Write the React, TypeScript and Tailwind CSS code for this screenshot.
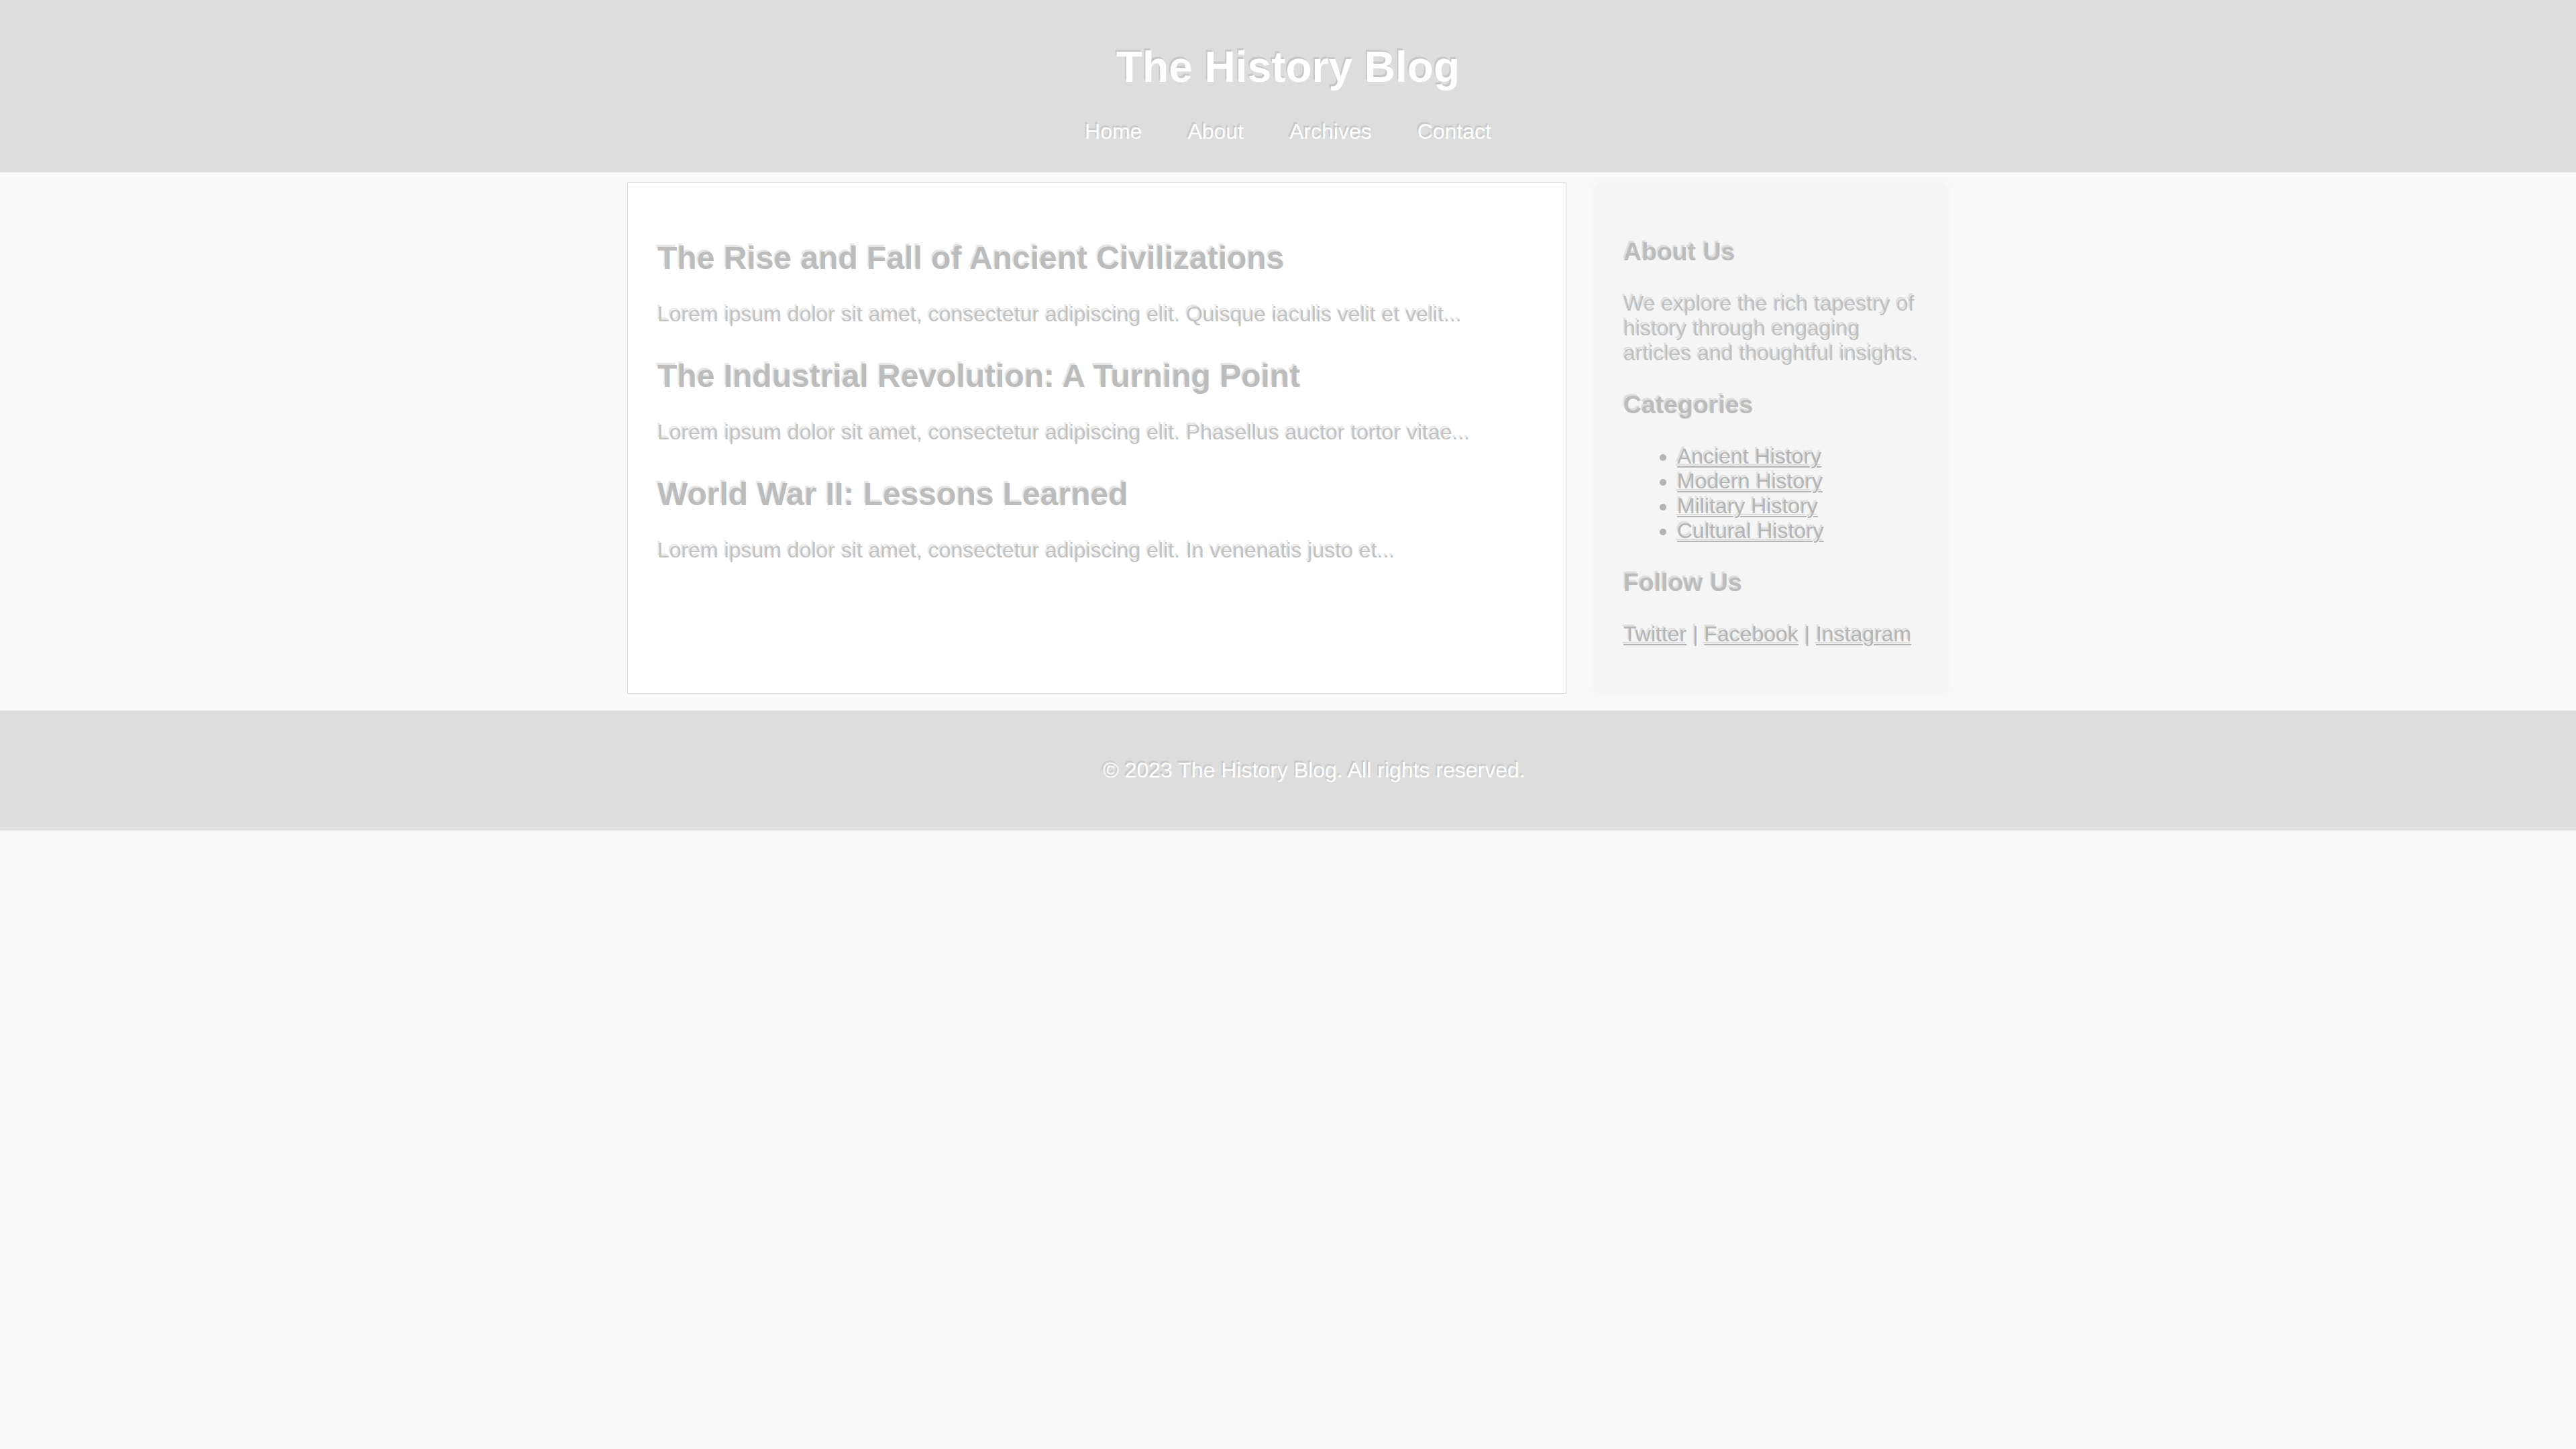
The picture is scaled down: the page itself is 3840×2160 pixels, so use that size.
import React from "react";

const shadow = "[text-shadow:-2px_-3px_1px_rgba(0,0,0,0.10)]";

const articles = [
  {
    title: "The Rise and Fall of Ancient Civilizations",
    text: "Lorem ipsum dolor sit amet, consectetur adipiscing elit. Quisque iaculis velit et velit...",
  },
  {
    title: "The Industrial Revolution: A Turning Point",
    text: "Lorem ipsum dolor sit amet, consectetur adipiscing elit. Phasellus auctor tortor vitae...",
  },
  {
    title: "World War II: Lessons Learned",
    text: "Lorem ipsum dolor sit amet, consectetur adipiscing elit. In venenatis justo et...",
  },
];

const categories = ["Ancient History", "Modern History", "Military History", "Cultural History"];

export default function App() {
  return (
    <div
      className="min-h-[2160px] w-full bg-[#fafafa] text-[32px] leading-[37px]"
      style={{ fontFamily: '"Liberation Sans", Arial, sans-serif' }}
    >
      <header className="flex flex-col items-center bg-[#dddddd] pt-[63px] pb-[42px] text-white">
        <h1 className={`text-[64px] leading-[74px] font-bold ${shadow}`}>The History Blog</h1>
        <nav className={`mt-[41px] flex gap-[68px] leading-[37px] ${shadow}`}>
          <a>Home</a>
          <a>About</a>
          <a>Archives</a>
          <a>Contact</a>
        </nav>
      </header>

      <div className="mx-auto mt-[15px] flex w-[1970px] items-stretch gap-[40px]">
        <main className="w-[1400px] border border-[#d4d4d4] bg-white pt-[84px] pl-[44px] pr-[44px]">
          {articles.map((a, i) => (
            <article key={i} className={i === 0 ? "" : "mt-[46px]"}>
              <h2 className={`text-[48px] leading-[55px] font-bold text-[#bcbcbc] ${shadow}`}>{a.title}</h2>
              <p className={`mt-[38px] text-[#c2c2c2] ${shadow}`}>{a.text}</p>
            </article>
          ))}
        </main>

        <aside className="w-[530px] rounded-[12px] bg-[#f5f5f5] pt-[82px] pb-[70px] pl-[45px] pr-[40px] shadow-[0_0_14px_6px_rgba(0,0,0,0.015)]">
          <h3 className={`text-[37.44px] leading-[43px] font-bold text-[#bcbcbc] ${shadow}`}>About Us</h3>
          <p className={`mt-[37px] text-[#c0c0c0] ${shadow}`}>
            We explore the rich tapestry of history through engaging articles and thoughtful insights.
          </p>
          <h3 className={`mt-[37px] text-[37.44px] leading-[43px] font-bold text-[#bcbcbc] ${shadow}`}>Categories</h3>
          <ul className={`mt-[37px] list-disc pl-[80px] text-[#b4b4b4] ${shadow}`}>
            {categories.map((c) => (
              <li key={c}>
                <a className="underline decoration-[2px] underline-offset-[4px]">{c}</a>
              </li>
            ))}
          </ul>
          <h3 className={`mt-[37px] text-[37.44px] leading-[43px] font-bold text-[#bcbcbc] ${shadow}`}>Follow Us</h3>
          <p className={`mt-[37px] text-[#b4b4b4] ${shadow}`}>
            <a className="underline decoration-[2px] underline-offset-[4px]">Twitter</a> |{" "}
            <a className="underline decoration-[2px] underline-offset-[4px]">Facebook</a> |{" "}
            <a className="underline decoration-[2px] underline-offset-[4px]">Instagram</a>
          </p>
        </aside>
      </div>

      <footer className={`mt-[25px] bg-[#dddddd] pt-[71px] pb-[71px] pl-[78px] text-center text-white ${shadow}`}>
        <p>© 2023 The History Blog. All rights reserved.</p>
      </footer>
    </div>
  );
}
